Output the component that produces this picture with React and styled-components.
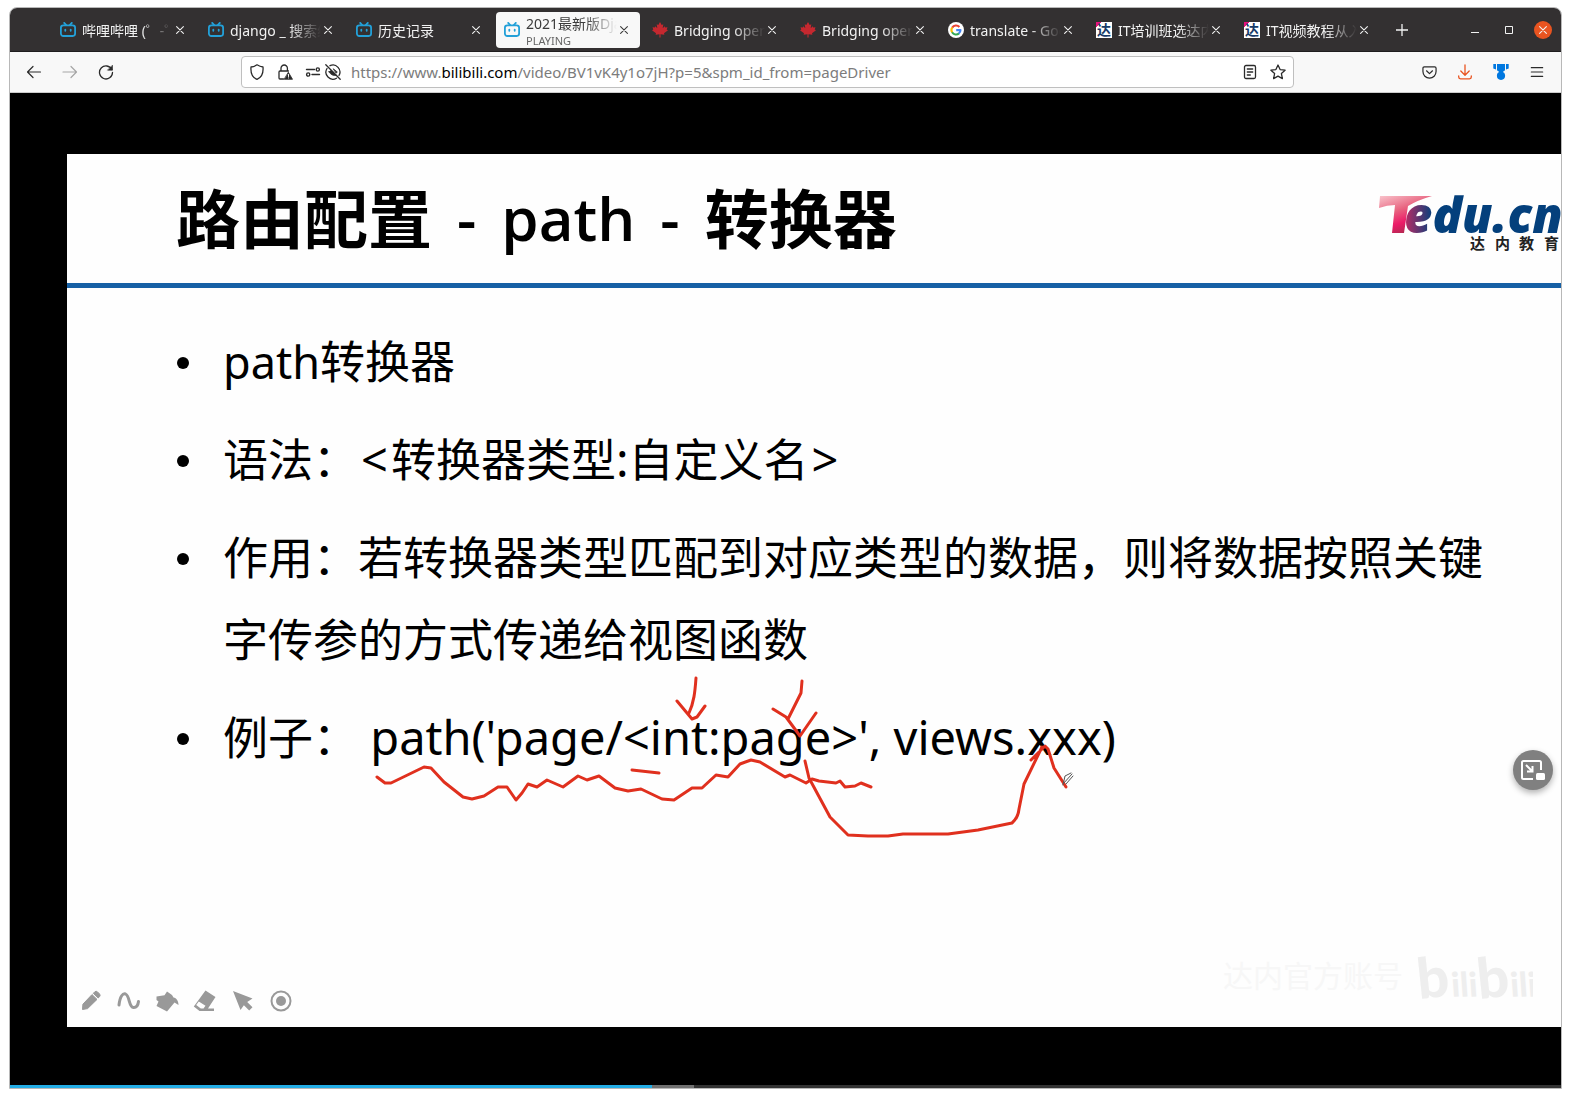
import React from "react";
import styled, { createGlobalStyle, css } from "styled-components";

const Global = createGlobalStyle`
  * { box-sizing: border-box; }
  body { margin: 0; background: #fff; }
  button { border: 0; padding: 0; background: none; color: inherit; font: inherit; display: grid; place-items: center; }
  svg { display: block; flex: none; }
`;

const uiFont = `"Noto Sans", "Noto Sans CJK SC", sans-serif`;

const Page = styled.div`
  height: 100vh;
  min-height: 600px;
  padding: 7px 9px 9px;
  font-family: ${uiFont};
`;
const Browser = styled.div`
  height: 100%;
  display: flex;
  flex-direction: column;
  border: 1px solid #b8b8b8;
  border-radius: 8px 8px 0 0;
  overflow: hidden;
`;
const TabBar = styled.header`
  height: 44px;
  flex: none;
  display: flex;
  align-items: center;
  padding: 0 9px 0 42px;
  background: #333031;
  border-bottom: 1px solid #1f1d1e;
  color: #f2f2f2;
`;
const Tab = styled.div`
  flex: 0 1 148px;
  height: 36px;
  min-width: 0;
`;
const TabInner = styled.div`
  height: 100%;
  display: flex;
  align-items: center;
  gap: 6px;
  width: 144px;
  padding: 0 11px 0 8px;
  border-radius: 4px;
  ${(p) => p.$active && css`background: #f8f8f8; color: #3a3a3a;`}
`;
const TabTexts = styled.div`
  flex: 1;
  min-width: 0;
  padding-top: 2px;
  overflow: hidden;
  display: flex;
  flex-direction: column;
  mask-image: linear-gradient(to right, #000 calc(100% - 32px), transparent);
`;
const TabTitle = styled.span`
  font-size: 14px;
  line-height: 20px;
  white-space: nowrap;
`;
const TabState = styled.span`
  font-size: 11px;
  line-height: 13px;
  color: #666;
`;
const TabClose = styled.button`
  width: 10px;
  height: 16px;
  margin-left: -4px;
`;
const NewTab = styled.button`
  width: 30px;
  height: 30px;
  margin-left: 3px;
`;
const WindowButtons = styled.div`
  margin-left: auto;
  display: flex;
  align-items: center;
  gap: 16px;
`;
const WindowButton = styled.button`
  width: 18px;
  height: 18px;
  border-radius: 9px;
  ${(p) => p.$close && css`background: #e95420;`}
`;

const ToolBar = styled.div`
  height: 41px;
  flex: none;
  display: grid;
  grid-template-columns: 231px minmax(0, 1fr) 267px;
  align-items: center;
  background: #f8f8f8;
  border-bottom: 1px solid #ccc;
  color: #2b2b2b;
`;
const NavButtons = styled.nav`
  display: flex;
  gap: 16px;
  padding-left: 14px;
`;
const Tool = styled.button`
  width: 20px;
  height: 20px;
  ${(p) => p.$dim && css`opacity: 0.4;`}
`;
const Permissions = styled.div`
  display: flex;
`;
const UrlBox = styled.div`
  height: 32px;
  display: flex;
  align-items: center;
  gap: 8px;
  padding: 0 5px;
  background: #fff;
  border: 1px solid #bfbfbf;
  border-radius: 4px;
`;
const Url = styled.div`
  flex: 1;
  font-size: 15px;
  line-height: 20px;
  color: #7c7c7c;
  white-space: nowrap;
  overflow: hidden;
  b { font-weight: 400; color: #000; }
`;
const Extras = styled.div`
  display: flex;
  justify-content: flex-end;
  gap: 16px;
  padding-right: 14px;
`;

const Player = styled.main`
  position: relative;
  flex: 1;
  min-height: 0;
  display: flex;
  flex-direction: column;
  background: #000;
`;
const Frame = styled.div`
  flex: 1;
  min-height: 0;
  padding: 61px 0 58px 57px;
  display: flex;
`;
const Slide = styled.article`
  position: relative;
  flex: 1;
  min-width: 0;
  display: flex;
  flex-direction: column;
  background: #fefefe;
  color: #000;
  overflow: hidden;
`;
const SlideHead = styled.div`
  height: 134px;
  flex: none;
  display: flex;
  justify-content: space-between;
  padding: 20px 0 0 109px;
  border-bottom: 5px solid #1660a5;
`;
const Title = styled.h1`
  display: flex;
  gap: 25px;
  height: 90px;
  margin: 0;
  font-family: "Open Sans", "Noto Sans CJK SC", sans-serif;
  font-size: 64px;
  line-height: 90px;
  font-weight: 600;
  white-space: nowrap;
`;
const TitleLatin = styled.span`
  font-size: 60px;
  line-height: 88px;
`;
const Points = styled.ul`
  list-style: none;
  margin: 0;
  padding: 33px 50px 0 110px;
  display: flex;
  flex-direction: column;
  gap: 16px;
`;
const Point = styled.li`
  display: grid;
  grid-template-columns: 46px minmax(0, 1fr);
  font-size: 45px;
  line-height: 82px;
  font-family: "Noto Sans", "Noto Sans CJK SC", sans-serif;
  &::before {
    content: "";
    width: 12px;
    height: 12px;
    margin-top: 36px;
    border-radius: 6px;
    background: #000;
  }
`;
const Latin = styled.span`
  font-size: 47px;
  line-height: 1;
`;
const Bracket = styled(Latin)`
  padding: 0 3px;
`;
const Ink = styled.svg`
  position: absolute;
  left: 0;
  top: 0;
  pointer-events: none;
`;
const SlideFoot = styled.div`
  margin-top: auto;
  display: flex;
  justify-content: space-between;
  align-items: flex-end;
  padding: 0 28px 14px 12px;
`;
const Pens = styled.div`
  display: flex;
  gap: 14px;
  color: #999;
`;
const Pen = styled.button`
  width: 24px;
  height: 24px;
`;
const Watermark = styled.div`
  display: flex;
  align-items: center;
  gap: 14px;
  padding-bottom: 10px;
  font-size: 30px;
  line-height: 40px;
  color: #f7f7f7;
`;
const Pip = styled.button`
  position: absolute;
  right: 8px;
  top: 657px;
  width: 40px;
  height: 40px;
  border-radius: 20px;
  background: #808080;
  color: #fff;
  box-shadow: 0 3px 6px rgba(0, 0, 0, 0.3);
`;
const Progress = styled.div`
  height: 3px;
  flex: none;
  display: flex;
  background: #333;
`;
const Bar = styled.div`
  background: ${(p) => (p.$played ? "#23ade5" : "#707070")};
`;

const Cross = ({ s = 8 }) => (
  <svg width={s} height={s} viewBox="0 0 8 8" stroke="currentColor" strokeWidth="1.1" strokeLinecap="round"><path d="M.6.6l6.8 6.8M7.4.6L.6 7.4" /></svg>
);
const Icon = ({ children, w = 16, ...r }) => (
  <svg width={w} height={w} viewBox="0 0 16 16" fill="none" stroke="currentColor" strokeWidth="1.3" strokeLinecap="round" strokeLinejoin="round" {...r}>{children}</svg>
);
const Bili = () => (
  <Icon stroke="#23a0d8" strokeWidth="1.8"><rect x=".9" y="3.4" width="14.2" height="10.6" rx="2.4" /><path d="M4.2.9l2 2.2M11.8.9l-2 2.2M5.3 7.6v1.200M10.7 7.6v1.200" /></Icon>
);
const Leaf = () => (
  <Icon stroke="none" fill="#c5282f"><path d="M8 0l1.7 3 1.6-.8-.6 4 2-2 .5 1.3 2.3-.3-.8 2.2 1.3.9-4 3 .4 1.4-3.9-.5.1 3.3h-1.2l.1-3.3-3.9.5.4-1.4-4-3 1.3-.9-.8-2.2 2.3.3.5-1.3 2 2-.6-4 1.6.8z" /></Icon>
);
const Google = () => (
  <Icon strokeWidth="2.1" strokeLinecap="butt">
    <circle cx="8" cy="8" r="8" fill="#fff" stroke="none" />
    <path d="M4.2 5.6A4.5 4.5 0 0 1 11.4 5" stroke="#ea4335" />
    <path d="M4.2 5.5a4.6 4.6 0 0 0 0 5" stroke="#fbbc05" />
    <path d="M4.1 10.3A4.5 4.5 0 0 0 11 11.4" stroke="#34a853" />
    <path d="M8.2 8.1h4.3a4.3 4.3 0 0 1-1.7 3.4" stroke="#4285f4" />
  </Icon>
);
const DaBox = styled.span`
  flex: none;
  width: 16px;
  height: 16px;
  background: linear-gradient(135deg, #e6127d 0 18%, transparent 18%), #fff;
  color: #173a68;
  font-size: 14px;
  line-height: 16px;
  font-weight: 700;
  text-align: center;
`;
const Da = () => <DaBox>达</DaBox>;

const tabs = [
  { icon: Bili, title: "哔哩哔哩 (゜-゜)つロ 干杯~" },
  { icon: Bili, title: "django _ 搜索结果" },
  { icon: Bili, title: "历史记录" },
  { icon: Bili, title: "2021最新版Django", active: true, state: "PLAYING" },
  { icon: Leaf, title: "Bridging open data" },
  { icon: Leaf, title: "Bridging open data" },
  { icon: Google, title: "translate - Google" },
  { icon: Da, title: "IT培训班选达内教育" },
  { icon: Da, title: "IT视频教程从入门" },
];

const pens = [
  ["Pencil", <path d="M3.5 20.5l.4-5.3L13 5.6l5 4.8-9.4 9.2zM14.300 4.300l1.600-1.600q1.200-1 2.600.2l2 2q1.200 1.300.2 2.500l-1.500 1.600z" fill="currentColor" stroke="currentColor" strokeWidth="1" strokeLinejoin="round" />],
  ["Curve", <path d="M2 16C3 7 6 4 8.500 5c4.500 2 3 13 8 13.500 3 .2 4.500-2 5-6" fill="none" stroke="currentColor" strokeWidth="3" strokeLinecap="round" />],
  ["Fill", <path d="M1.500 7.500l8-1.300L12 2.500l5 3.500 1.500 2.500c3 .6 5 3.500 5 7.500l-4-2.500L12 22.500 1.500 17l2-4.500-2-1.500z" fill="currentColor" />],
  ["Eraser", <path fillRule="evenodd" d="M12.500 1.500l10 6.500-7.500 11.500h6v2.500H6.500L.8 17.500zM5.800 12.500L3.200 16l4.600 3.500h2.700l2-2.700z" fill="currentColor" />],
  ["Pointer", <path d="M2 2l19.500 7.500-5.300 3.400 5.300 5.300-3.300 3.300-5.300-5.300L9.500 21z" fill="currentColor" />],
  ["Laser", <><circle cx="12" cy="12" r="9.500" fill="none" stroke="currentColor" strokeWidth="2" /><circle cx="12" cy="12" r="5" fill="currentColor" /></>],
];

const TeduLogo = () => (
  <svg width="186" height="80" viewBox="0 0 186 80" role="img" aria-label="Tedu.cn">
    <defs>
      <linearGradient id="pink" x1="0" y1="0" x2=".5" y2="1"><stop offset="0" stopColor="#f9c4cc" /><stop offset=".45" stopColor="#e8637f" /><stop offset=".75" stopColor="#ec1a68" /><stop offset="1" stopColor="#b02a50" /></linearGradient>
      <linearGradient id="fade" x1="0" y1="0" x2="1" y2="0"><stop offset="0" stopColor="#c22a63" /><stop offset=".18" stopColor="#04407c" /><stop offset="1" stopColor="#04407c" /></linearGradient>
    </defs>
    <path d="M5 22h52q-14 4-24 10l-4 27H17l3-28q-8 0-16 3z" fill="url(#pink)" />
    <text x="29" y="59" fontFamily="Open Sans" fontWeight="800" fontStyle="italic" fontSize="49" fill="url(#fade)">edu.cn</text>
    <text y="75" fontFamily="Noto Sans CJK SC" fontWeight="700" fontSize="15" fill="#222"><tspan x="95">达</tspan><tspan x="120">内</tspan><tspan x="144">教</tspan><tspan x="169">育</tspan></text>
  </svg>
);

export default function App() {
  return (
    <Page>
      <Global />
      <Browser>
        <TabBar>
          {tabs.map(({ icon: I, title, active, state }, i) => (
            <Tab key={i}>
              <TabInner $active={active}>
                <I />
                <TabTexts>
                  <TabTitle>{title}</TabTitle>
                  {state && <TabState>{state}</TabState>}
                </TabTexts>
                <TabClose aria-label="Close tab"><Cross /></TabClose>
              </TabInner>
            </Tab>
          ))}
          <NewTab aria-label="New tab"><svg width="12" height="12" stroke="currentColor" strokeWidth="1.3"><path d="M6 0v12M0 6h12" /></svg></NewTab>
          <WindowButtons>
            <WindowButton aria-label="Minimize"><svg width="8" height="8" stroke="currentColor"><path d="M0 6.500h8" /></svg></WindowButton>
            <WindowButton aria-label="Maximize"><svg width="8" height="8" stroke="currentColor" fill="none"><path d="M.5.5h7v7h-7z" /></svg></WindowButton>
            <WindowButton $close aria-label="Close"><Cross /></WindowButton>
          </WindowButtons>
        </TabBar>
        <ToolBar>
          <NavButtons>
            <Tool aria-label="Back"><Icon strokeWidth="1.2"><path d="M14.500 8H1.500M7 2.500L1.500 8 7 13.500" /></Icon></Tool>
            <Tool $dim aria-label="Forward"><Icon strokeWidth="1.2"><path d="M1 8h13.500M9 2.500L14.500 8 9 13.500" /></Icon></Tool>
            <Tool aria-label="Reload"><Icon><path d="M13.800 5.500A6.500 6.500 0 1 0 14.500 8.500" /><path d="M14.500 1.500v4.700H9.800z" fill="currentColor" strokeWidth=".6" /></Icon></Tool>
          </NavButtons>
          <UrlBox>
            <Tool aria-label="Protection"><Icon><path d="M8 .8q3 2 6 2.200C14.500 9 12.500 13.500 8 15.300 3.500 13.500 1.500 9 2 3 5 2.800 8 .8 8 .8z" /></Icon></Tool>
            <Tool aria-label="Connection"><Icon><path d="M6.500 15H3q-1 0-1-1V8q0-1 1-1h8.500M4 7V4.200a3.200 3.200 0 0 1 6.400 0V7" /><path d="M11.500 8.500l4 6.800h-8z" fill="currentColor" strokeWidth=".8" /><path d="M11.500 10.500v2M11.500 13.900v.1" stroke="#fff" strokeWidth="1" /></Icon></Tool>
            <Permissions>
              <Tool aria-label="Permissions"><Icon strokeWidth="1.4"><path d="M1.500 5.500h8M7 10.500h7.500" /><circle cx="12.800" cy="5.500" r="1.600" /><circle cx="3.200" cy="10.500" r="1.600" /></Icon></Tool>
              <Tool aria-label="Autoplay"><Icon><path d="M5 1.700A7 7 0 0 1 14 11.500M2 4.500a7 7 0 0 0 9.500 9.700M.8.8l14.400 14.400" /><path d="M4 7.800l2.500-1.500 5 5q-5 1-7.500-3.500zM8.500 5l3.800 3-1 .9z" fill="currentColor" strokeWidth=".8" /></Icon></Tool>
            </Permissions>
            <Url>https://www.<b>bilibili.com</b>/video/BV1vK4y1o7jH?p=5&amp;spm_id_from=pageDriver</Url>
            <Tool aria-label="Reader view"><Icon><rect x="2.500" y="1.500" width="11" height="13" rx="1.500" /><path d="M5.300 5h5.400M5.300 8h5.400M5.300 11h3" /></Icon></Tool>
            <Tool aria-label="Bookmark"><Icon><path d="M8 1l2.100 4.600 5 .6-3.700 3.400 1 5L8 12.100l-4.400 2.500 1-5L.9 6.200l5-.6z" /></Icon></Tool>
          </UrlBox>
          <Extras>
            <Tool aria-label="Pocket"><Icon w={15}><path d="M2.500 2h11q1.500 0 1.500 1.500V7a7 7 0 0 1-14 0V3.500Q1 2 2.500 2zM4.800 6.200L8 9.200l3.200-3" /></Icon></Tool>
            <Tool aria-label="Downloads"><Icon stroke="#e95420" strokeWidth="1.300"><path d="M8 1v10M3.800 7L8 11.200 12.200 7M1.700 12v1q0 1.800 1.800 1.800h9q1.800 0 1.800-1.800v-1" /></Icon></Tool>
            <Tool aria-label="Rewards"><Icon fill="#0078e0" stroke="none"><path d="M.3 0H3v5.500L.3 4.500zM4 0h8v6.300L10.500 7.500h-5L4 6.300zM13 0h2.700v4.500L13 5.500z" /><circle cx="8" cy="11.800" r="4.100" /><path d="M6 6h4v4H6z" /></Icon></Tool>
            <Tool aria-label="Menu"><Icon w={14}><path d="M1.500 3h13M1.500 8h13M1.500 13h13" /></Icon></Tool>
          </Extras>
        </ToolBar>
        <Player>
          <Frame>
            <Slide>
              <SlideHead>
                <Title>
                  <span>路由配置</span>
                  <TitleLatin>-</TitleLatin>
                  <TitleLatin>path</TitleLatin>
                  <TitleLatin>-</TitleLatin>
                  <span>转换器</span>
                </Title>
                <TeduLogo />
              </SlideHead>
              <Points>
                <Point>path转换器</Point>
                <Point><span>语法：<Bracket>&lt;</Bracket>转换器类型<Latin>:</Latin>自定义名<Bracket>&gt;</Bracket></span></Point>
                <Point>作用：若转换器类型匹配到对应类型的数据，则将数据按照关键字传参的方式传递给视图函数</Point>
                <Point><span>例子：<Latin> path('page/&lt;int:page&gt;', views.xxx)</Latin></span></Point>
              </Points>
              <Ink width="1200" height="760" viewBox="67 154 1200 760" fill="none" stroke="#e0301e" strokeWidth="3" strokeLinecap="round" strokeLinejoin="round">
                <path d="M377 777L385 783 391 783 424 767 431 768 444 782 463 797 472 799 484 796 498 787 507 787 516 800 522 793 528 784 537 787 547 780 563 787 578 776 587 780 599 776 615 788 628 791 641 789 662 799 674 800 692 788 702 788 716 775 728 777 740 764 751 760 760 762 785 777 790 775 806 783 812 779 819 781 836 783 840 781 845 787 855 786 861 783 871 787" />
                <path d="M632 770l27 3M696 678c-1 14-2 24-7 35M677 701l15 18 5-2 8-11M802 681l-1 12-13 26M773 709l13 8 14 19 16-23" />
                <path d="M805 761l4 17 21 39 18 18 20 1h20l15-2h45l30-4 34-7q6-5 7-14l5-25 18-37M1031 760l14-14 3 3 6 19 12 19" />
                <path d="M1063 784l9-10M1066 784l7-8M1063 785l2-9 6-3" stroke="#555" strokeWidth="1" />
              </Ink>
              <SlideFoot>
                <Pens>
                  {pens.map(([name, shape]) => (
                    <Pen key={name} aria-label={name}><svg width="24" height="24" viewBox="0 0 24 24">{shape}</svg></Pen>
                  ))}
                </Pens>
                <Watermark>
                  <span>达内官方账号</span>
                  <svg width="116" height="54" fontFamily="Lato" fontWeight="900" fill="#eee" role="img" aria-label="bilibili">
                    <text y="50" fontSize="56"><tspan x="2" rotate="-6">b</tspan><tspan x="62" rotate="-6">b</tspan></text>
                    <text y="48" fontSize="34"><tspan x="35" rotate="-4">ili</tspan><tspan x="94" rotate="-4">ili</tspan></text>
                  </svg>
                </Watermark>
              </SlideFoot>
            </Slide>
          </Frame>
          <Pip aria-label="Picture in picture">
            <svg width="24" height="20" viewBox="0 0 24 20" fill="none" stroke="currentColor" strokeWidth="2"><path d="M12 19H2.500Q1 19 1 17.500v-15Q1 1 2.500 1h16Q20 1 20 2.500V10M5 5l6 6M11.500 6v5.500H6" /><rect x="15" y="13" width="9" height="7" rx="1.500" fill="currentColor" stroke="none" /></svg>
          </Pip>
          <Progress>
            <Bar $played style={{ width: "41.400%" }} />
            <Bar style={{ width: "2.700%" }} />
          </Progress>
        </Player>
      </Browser>
    </Page>
  );
}
